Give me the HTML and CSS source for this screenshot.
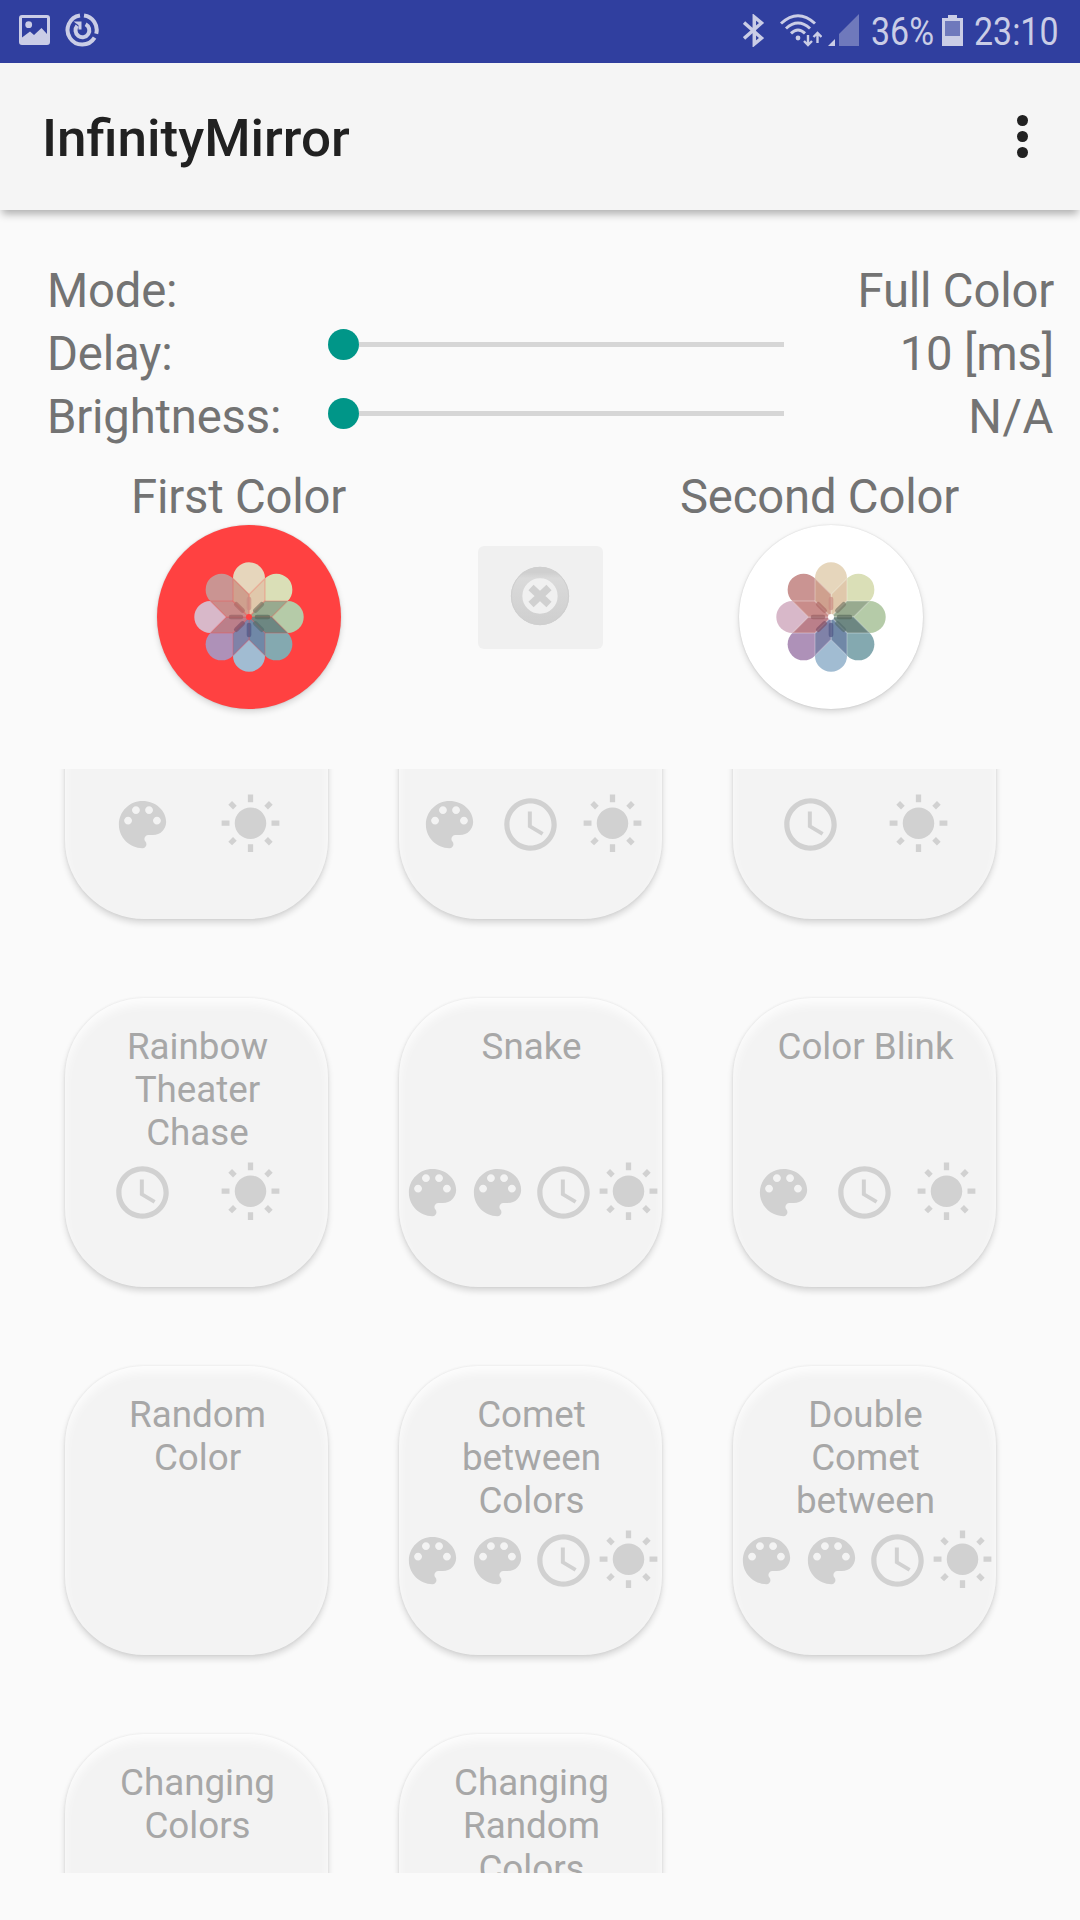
FILE: index.html
```html
<!DOCTYPE html>
<html lang="en">
<head>
<meta charset="utf-8">
<title>InfinityMirror</title>
<link rel="stylesheet" href="styles.css">
</head>
<body>
<svg class="defs" width="0" height="0">
  <symbol id="palette" viewBox="0 0 24 24"><path d="M12 3c-4.970 0-9 4.030-9 9s4.030 9 9 9c.83 0 1.500-.67 1.500-1.500 0-.39-.15-.74-.39-1.010-.23-.26-.38-.61-.38-.99 0-.83.67-1.500 1.500-1.500H16c2.760 0 5-2.240 5-5 0-4.420-4.030-8-9-8zm-5.500 9c-.83 0-1.500-.67-1.500-1.500S5.670 9 6.500 9 8 9.670 8 10.500 7.330 12 6.500 12zm3-4C8.670 8 8 7.330 8 6.500S8.670 5 9.500 5s1.500.67 1.500 1.500S10.330 8 9.500 8zm5 0c-.83 0-1.500-.67-1.500-1.500S13.670 5 14.500 5s1.500.67 1.500 1.500S15.330 8 14.500 8zm3 4c-.83 0-1.500-.67-1.500-1.500S16.670 9 17.500 9s1.500.67 1.500 1.500-.67 1.500-1.500 1.500z"/></symbol>
  <symbol id="sun" viewBox="0 0 24 24"><path d="M6.760 4.840l-1.800-1.790-1.410 1.410 1.790 1.790 1.420-1.410zM4 10.500H1v2h3v-2zm9-9.950h-2V3.500h2V.55zm7.450 3.910l-1.410-1.410-1.790 1.790 1.410 1.410 1.790-1.790zm-3.210 13.700l1.790 1.800 1.410-1.410-1.800-1.790-1.400 1.400zM20 10.500v2h3v-2h-3zm-8-5c-3.310 0-6 2.690-6 6s2.690 6 6 6 6-2.690 6-6-2.690-6-6-6zm-1 16.950h2V19.500h-2v2.950zm-7.450-3.910l1.410 1.410 1.790-1.800-1.410-1.410-1.790 1.800z"/></symbol>
  <symbol id="clock" viewBox="0 0 24 24"><path d="M11.990 2C6.470 2 2 6.480 2 12s4.470 10 9.990 10C17.520 22 22 17.520 22 12S17.520 2 11.990 2zM12 20c-4.420 0-8-3.580-8-8s3.580-8 8-8 8 3.580 8 8-3.580 8-8 8zm.5-13H11v6l5.250 3.150.75-1.230-4.500-2.670z"/></symbol>
  <symbol id="flower" viewBox="-56 -56 112 112">
    <g>
      <path fill="#e6d6bc" d="M0 0L-16 -16V-38.700a16 16 0 0 1 32 0V-16Z"/>
      <path fill="#dadfb7" transform="rotate(45)" d="M0 0L-16 -16V-38.700a16 16 0 0 1 32 0V-16Z"/>
      <path fill="#b5cba8" transform="rotate(90)" d="M0 0L-16 -16V-38.700a16 16 0 0 1 32 0V-16Z"/>
      <path fill="#84a9b0" transform="rotate(135)" d="M0 0L-16 -16V-38.700a16 16 0 0 1 32 0V-16Z"/>
      <path fill="#a1bcd2" transform="rotate(180)" d="M0 0L-16 -16V-38.700a16 16 0 0 1 32 0V-16Z"/>
      <path fill="#ae91b8" transform="rotate(225)" d="M0 0L-16 -16V-38.700a16 16 0 0 1 32 0V-16Z"/>
      <path fill="#d8b8c9" transform="rotate(270)" d="M0 0L-16 -16V-38.700a16 16 0 0 1 32 0V-16Z"/>
      <path fill="#ca9492" transform="rotate(315)" d="M0 0L-16 -16V-38.700a16 16 0 0 1 32 0V-16Z"/>
    </g>
    <g stroke="currentColor" stroke-opacity=".24" stroke-width="1.400" stroke-linejoin="round">
      <path fill="#e0c8ab" d="M0 0V-22.600L16 -38.600V-16Z"/>
      <path fill="#98aa8f" transform="rotate(45)" d="M0 0V-22.600L16 -38.600V-16Z"/>
      <path fill="#6d8782" transform="rotate(90)" d="M0 0V-22.600L16 -38.600V-16Z"/>
      <path fill="#7088a7" transform="rotate(135)" d="M0 0V-22.600L16 -38.600V-16Z"/>
      <path fill="#8082a8" transform="rotate(180)" d="M0 0V-22.600L16 -38.600V-16Z"/>
      <path fill="#bb7f8a" transform="rotate(225)" d="M0 0V-22.600L16 -38.600V-16Z"/>
      <path fill="#c98c8a" transform="rotate(270)" d="M0 0V-22.600L16 -38.600V-16Z"/>
      <path fill="#cfa08e" transform="rotate(315)" d="M0 0V-22.600L16 -38.600V-16Z"/>
    </g>
    <g stroke-width="4.600" stroke-linecap="round" opacity=".7">
      <path stroke="#cb8d84" d="M0 -9V-18"/>
      <path stroke="#7b7b68" transform="rotate(45)" d="M0 -9V-18"/>
      <path stroke="#596a5c" transform="rotate(90)" d="M0 -8V-19"/>
      <path stroke="#566e70" transform="rotate(135)" d="M0 -9V-18"/>
      <path stroke="#4f5685" transform="rotate(180)" d="M0 -8V-18"/>
      <path stroke="#7f5068" transform="rotate(225)" d="M0 -9V-18"/>
      <path stroke="#9a6064" transform="rotate(270)" d="M0 -8V-18"/>
      <path stroke="#b06b67" transform="rotate(315)" d="M0 -9V-18"/>
    </g>
    <circle r="3" fill="currentColor"/>
  </symbol>
</svg>

<header class="status">
  <svg class="st-image" viewBox="0 0 31 30"><path fill-rule="evenodd" d="M3 0H28a3 3 0 0 1 3 3V27a3 3 0 0 1 -3 3H3a3 3 0 0 1 -3 -3V3a3 3 0 0 1 3 -3ZM3 3V22.500L11 16.500L15 20L22.500 13L28 19V3Z"/><circle cx="9.700" cy="9.700" r="3.400"/></svg>
  <svg class="st-sync" viewBox="-17 -17 34 34" fill="none" stroke="currentColor"><path stroke-width="4" d="M2 -14.500A14.600 14.600 0 0 1 14.200 3.800M12.600 7.600A14.600 14.600 0 1 1 -2 -14.500"/><path stroke-width="4" d="M3.600 -5.800A6.900 6.900 0 1 1 -4.800 -4.200"/><path fill="currentColor" stroke="none" d="M-8.500 -8.500H-.5V-.5H-3.500V-4.800Z"/></svg>
  <div class="st-right">
    <svg class="st-bt" viewBox="0 0 21 33" fill="none" stroke="currentColor" stroke-width="3.500"><path d="M1 8.500L18.500 24L11.300 30V3L18.500 9L1 24.500"/></svg>
    <svg class="st-wifi" viewBox="0 0 42 33"><g fill="none" stroke="currentColor" stroke-width="3"><path d="M1 9.500Q18 -6 35 9.500"/><path d="M6 14.500Q18 3.500 30 14.500"/><path d="M11 19.300Q18 12.700 25 19.300"/></g><circle cx="18" cy="24" r="2.400"/><path fill="none" stroke="currentColor" stroke-width="2.400" d="M28 21V31M24 27L28 31L32 27M37.500 29V19M33.500 23L37.500 19L41.500 23"/></svg>
    <svg class="st-signal" viewBox="0 0 32 32"><path d="M7 25V32H0Z"/><path class="dim" d="M31 0V32H11V20Z"/></svg>
    <span class="st-pct"><span>36%</span></span>
    <svg class="st-batt" viewBox="0 0 21 31"><path d="M6 0H15V3H21V31H0V3H6Z"/><path class="dim" d="M3 6H18V21H3Z"/></svg>
    <span class="st-time"><span>23:10</span></span>
  </div>
</header>

<div class="toolbar">
  <h1>InfinityMirror</h1>
  <div class="overflow"><i></i><i></i><i></i></div>
</div>

<section class="settings">
  <div class="names"><div>Mode:</div><div>Delay:</div><div>Brightness:</div></div>
  <div class="sliders"><div class="slider"></div><div class="slider"></div></div>
  <div class="values"><div>Full Color</div><div>10 [ms]</div><div class="na">N/A</div></div>
</section>

<section class="colors">
  <div class="picker">
    <div class="picker-name">First Color</div>
    <div class="swatch red"><svg><use href="#flower"/></svg></div>
  </div>
  <div class="cancel">
    <svg viewBox="-30 -30 60 60">
      <defs><linearGradient id="ring" x1="0" y1="0" x2="0" y2="1"><stop offset="0" stop-color="#cfcfcf"/><stop offset=".12" stop-color="#dadada"/><stop offset="1" stop-color="#d0d0d0"/></linearGradient></defs>
      <circle r="23.400" fill="none" stroke="url(#ring)" stroke-width="11.500"/>
      <circle r="28.600" fill="none" stroke="#cfcfcf" stroke-width="1"/>
      <path d="M-9 -8.500L9 8.500M9 -8.500L-9 8.500" stroke="#d0d0d0" stroke-width="7.500"/>
    </svg>
  </div>
  <div class="picker">
    <div class="picker-name">Second Color</div>
    <div class="swatch white"><svg><use href="#flower"/></svg></div>
  </div>
</section>

<main class="modes">
  <div class="grid">
    <article class="card"><h2></h2><div class="icons"><svg><use href="#palette"/></svg><svg><use href="#sun"/></svg></div></article>
    <article class="card"><h2></h2><div class="icons"><svg><use href="#palette"/></svg><svg><use href="#clock"/></svg><svg><use href="#sun"/></svg></div></article>
    <article class="card"><h2></h2><div class="icons"><svg><use href="#clock"/></svg><svg><use href="#sun"/></svg></div></article>
    <article class="card"><h2>Rainbow Theater Chase</h2><div class="icons"><svg><use href="#clock"/></svg><svg><use href="#sun"/></svg></div></article>
    <article class="card"><h2>Snake</h2><div class="icons"><svg><use href="#palette"/></svg><svg><use href="#palette"/></svg><svg><use href="#clock"/></svg><svg><use href="#sun"/></svg></div></article>
    <article class="card"><h2>Color Blink</h2><div class="icons"><svg><use href="#palette"/></svg><svg><use href="#clock"/></svg><svg><use href="#sun"/></svg></div></article>
    <article class="card"><h2>Random Color</h2></article>
    <article class="card"><h2>Comet between Colors</h2><div class="icons"><svg><use href="#palette"/></svg><svg><use href="#palette"/></svg><svg><use href="#clock"/></svg><svg><use href="#sun"/></svg></div></article>
    <article class="card"><h2>Double Comet between</h2><div class="icons"><svg><use href="#palette"/></svg><svg><use href="#palette"/></svg><svg><use href="#clock"/></svg><svg><use href="#sun"/></svg></div></article>
    <article class="card"><h2>Changing Colors</h2></article>
    <article class="card"><h2>Changing Random Colors</h2></article>
  </div>
</main>
</body>
</html>
```
FILE: styles.css
```css
* { box-sizing: border-box; }

body {
  margin: 0;
  width: 1080px;
  height: 1920px;
  overflow: hidden;
  display: flex;
  flex-direction: column;
  background: #fafafa;
  color: #737373;
  font-family: Roboto, "Liberation Sans", sans-serif;
}

.defs { display: none; }
svg { display: block; flex: none; }

/* Status bar */
.status {
  flex: none;
  height: 63px;
  display: flex;
  align-items: flex-start;
  padding: 0 22px 0 19px;
  background: #303f9f;
  color: #cacde6;
  fill: currentColor;
}
.status .dim { fill: #6f79bc; }
.st-image { width: 31px; height: 30px; margin-top: 15px; }
.st-sync { width: 34px; height: 34px; margin: 13px 0 0 15px; }
.st-right { margin-left: auto; display: flex; }
.st-bt { width: 21px; height: 33px; margin-top: 14px; }
.st-wifi { width: 42px; height: 33px; margin: 14px 0 0 16px; }
.st-signal { width: 32px; height: 32px; margin: 14px 0 0 6px; }
.st-batt { width: 21px; height: 31px; margin: 15px 0 0 9px; }
.st-pct, .st-time {
  height: 46px;
  margin-top: 9px;
  font-size: 39px;
  line-height: 46px;
  white-space: nowrap;
}
.st-pct { width: 62px; margin-left: 11px; }
.st-time { width: 84px; margin-left: 11px; }
.st-pct span, .st-time span {
  display: inline-block;
  transform: scaleX(.87);
  transform-origin: 0 0;
}

/* Toolbar */
.toolbar {
  flex: none;
  height: 147px;
  display: flex;
  align-items: center;
  justify-content: space-between;
  padding: 0 52px 0 42px;
  background: #f5f5f5;
  box-shadow: 0 6px 8px -2px rgba(0, 0, 0, .3);
}
.toolbar h1 {
  margin: 3px 0 0;
  font-size: 52.5px;
  line-height: 62px;
  font-weight: 500;
  color: #212121;
  transform: scaleX(1.01);
  transform-origin: 0 0;
}
.overflow { display: flex; flex-direction: column; gap: 5px; }
.overflow i { width: 10.8px; height: 10.8px; border-radius: 50%; background: #212121; }

/* Settings rows */
.settings {
  flex: none;
  height: 189px;
  margin-top: 50px;
  padding: 0 26px 0 47px;
  display: grid;
  grid-template-columns: 281px 456px 1fr;
  font-size: 47.25px;
  line-height: 63px;
  letter-spacing: -.2px;
  white-space: nowrap;
}
.values { text-align: right; }
.na { letter-spacing: .6px; }
.sliders { display: flex; flex-direction: column; gap: 38px; padding-top: 69px; }
.slider {
  height: 31px;
  display: flex;
  align-items: center;
}
.slider::before {
  content: "";
  width: 31px;
  height: 31px;
  border-radius: 50%;
  background: #009688;
}
.slider::after {
  content: "";
  flex: 1;
  height: 5px;
  background: #d6d6d6;
}

/* Colour pickers */
.colors {
  flex: none;
  height: 320px;
  display: flex;
  justify-content: space-between;
  padding: 20px 108px 0 131px;
  font-size: 47.25px;
  line-height: 56px;
  letter-spacing: -.2px;
}
.picker { display: flex; flex-direction: column; width: 218px; }
.picker:last-child { width: 293px; }
.picker-name { white-space: nowrap; }
.picker:last-child .picker-name { padding-left: 1px; }
.swatch {
  width: 184px;
  height: 184px;
  margin-left: 26px;
  border-radius: 50%;
  display: grid;
  place-items: center;
  box-shadow: 0 3px 6px rgba(0, 0, 0, .14), 0 0 2px rgba(0, 0, 0, .14);
}
.swatch svg { width: 112px; height: 112px; }
.picker:last-child .swatch { margin-left: 60px; }
.red { background: #ff4141; color: #ff4141; }
.white { background: #fff; color: #fff; }
.cancel {
  width: 125px;
  height: 103px;
  margin: 77px 0 0 52px;
  border-radius: 6px;
  background: #f0f0f0;
  display: grid;
  place-items: center;
}
.cancel svg { width: 60px; height: 60px; margin-bottom: 3px; }

/* Mode cards: scrolled list */
.modes {
  flex: none;
  height: 1104px;
  overflow: hidden;
}
.grid {
  display: grid;
  grid-template-columns: repeat(3, 263px);
  grid-auto-rows: 289px;
  gap: 79px 71px;
  margin-top: -139px;
  padding-left: 65px;
}
.card {
  border-radius: 79px;
  padding-top: 27px;
  background: #f3f3f3;
  box-shadow: 0 4px 6px rgba(0, 0, 0, .14), 0 0 3px rgba(0, 0, 0, .08), inset 0 7px 11px -1px rgba(255, 255, 255, .85);
}
.card h2 {
  height: 129px;
  margin: 0 39px 7px 41px;
  font-size: 36.75px;
  line-height: 43px;
  font-weight: 400;
  color: #a7a7a7;
  text-align: center;
}
.icons { display: flex; justify-content: space-evenly; }
.icons svg { width: 63px; height: 63px; fill: #d1d1d1; }
```
